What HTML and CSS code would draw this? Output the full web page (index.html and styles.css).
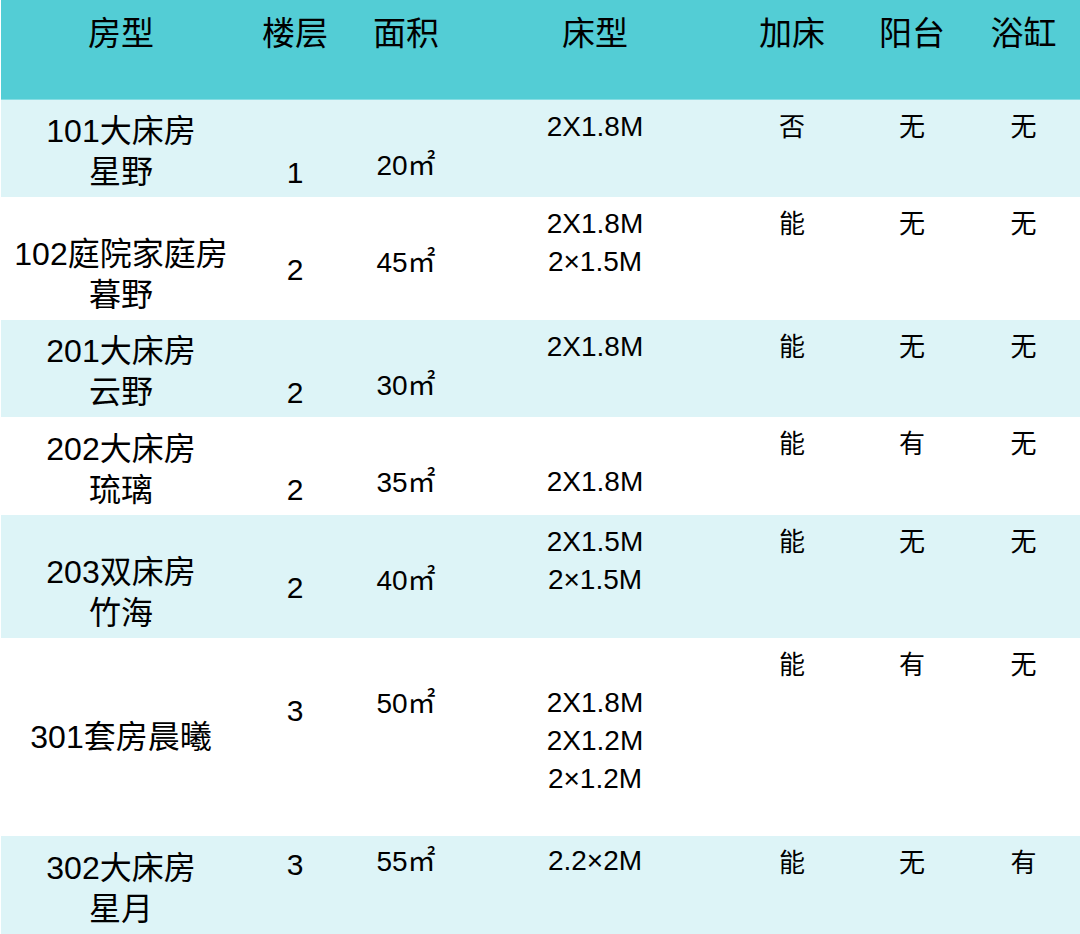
FILE: index.html
```html
<!DOCTYPE html>
<html lang="zh-CN">
<head>
<meta charset="utf-8">
<title>房型</title>
<link rel="stylesheet" href="styles.css">
</head>
<body>
<div class="sheet">
  <div class="row head">
    <div class="cell name">房型</div>
    <div class="cell floor">楼层</div>
    <div class="cell area">面积</div>
    <div class="cell bed">床型</div>
    <div class="cell opt extra">加床</div>
    <div class="cell opt balc">阳台</div>
    <div class="cell opt tub">浴缸</div>
  </div>

  <div class="row tint r1">
    <div class="cell name"><span>101大床房</span><span>星野</span></div>
    <div class="cell floor">1</div>
    <div class="cell area">20㎡</div>
    <div class="cell bed"><span>2X1.8M</span></div>
    <div class="cell opt extra">否</div>
    <div class="cell opt balc">无</div>
    <div class="cell opt tub">无</div>
  </div>

  <div class="row r2">
    <div class="cell name"><span>102庭院家庭房</span><span>暮野</span></div>
    <div class="cell floor">2</div>
    <div class="cell area">45㎡</div>
    <div class="cell bed"><span>2X1.8M</span><span>2×1.5M</span></div>
    <div class="cell opt extra">能</div>
    <div class="cell opt balc">无</div>
    <div class="cell opt tub">无</div>
  </div>

  <div class="row tint r3">
    <div class="cell name"><span>201大床房</span><span>云野</span></div>
    <div class="cell floor">2</div>
    <div class="cell area">30㎡</div>
    <div class="cell bed"><span>2X1.8M</span></div>
    <div class="cell opt extra">能</div>
    <div class="cell opt balc">无</div>
    <div class="cell opt tub">无</div>
  </div>

  <div class="row r4">
    <div class="cell name"><span>202大床房</span><span>琉璃</span></div>
    <div class="cell floor">2</div>
    <div class="cell area">35㎡</div>
    <div class="cell bed lead"><span>2X1.8M</span></div>
    <div class="cell opt extra">能</div>
    <div class="cell opt balc">有</div>
    <div class="cell opt tub">无</div>
  </div>

  <div class="row tint r5">
    <div class="cell name"><span>203双床房</span><span>竹海</span></div>
    <div class="cell floor">2</div>
    <div class="cell area">40㎡</div>
    <div class="cell bed"><span>2X1.5M</span><span>2×1.5M</span></div>
    <div class="cell opt extra">能</div>
    <div class="cell opt balc">无</div>
    <div class="cell opt tub">无</div>
  </div>

  <div class="row r6">
    <div class="cell name mid"><span>301套房晨曦</span></div>
    <div class="cell floor">3</div>
    <div class="cell area">50㎡</div>
    <div class="cell bed lead"><span>2X1.8M</span><span>2X1.2M</span><span>2×1.2M</span></div>
    <div class="cell opt extra">能</div>
    <div class="cell opt balc">有</div>
    <div class="cell opt tub">无</div>
  </div>

  <div class="row tint r7">
    <div class="cell name"><span>302大床房</span><span>星月</span></div>
    <div class="cell floor">3</div>
    <div class="cell area">55㎡</div>
    <div class="cell bed"><span>2.2×2M</span></div>
    <div class="cell opt extra">能</div>
    <div class="cell opt balc">无</div>
    <div class="cell opt tub">有</div>
  </div>
</div>
</body>
</html>
```

FILE: styles.css
```css
html, body {
  margin: 0;
  padding: 0;
  background: #ffffff;
}

body {
  font-family: "Liberation Sans", "Noto Sans CJK SC", sans-serif;
  color: #000000;
}

.sheet {
  width: 1080px;
  padding-left: 1px;
  box-sizing: border-box;
  display: flex;
  flex-direction: column;
}

.row {
  display: flex;
  background: #ffffff;
}

.row.tint {
  background: #ddf4f7;
}

.row.head {
  height: 100px;
  background: #53cdd5;
  box-shadow: inset 0 -1px 0 #86dde3;
}

.r1 { height: 97px; }
.r2 { height: 123px; }
.r3 { height: 97px; }
.r4 { height: 98px; }
.r5 { height: 123px; }
.r6 { height: 198px; }
.r7 { height: 98px; }

.cell {
  display: flex;
  flex-direction: column;
  align-items: center;
  text-align: center;
  box-sizing: border-box;
  white-space: nowrap;
}

.name {
  width: 240px;
  font-size: 32px;
  line-height: 41px;
  justify-content: flex-end;
  padding-bottom: 4px;
}

.name.mid {
  justify-content: center;
  padding-bottom: 0;
}

.floor {
  width: 108px;
  font-size: 30px;
  line-height: 36px;
  padding-top: 55px;
}

.area {
  width: 114px;
  font-size: 28px;
  line-height: 34px;
  padding-top: 49px;
}

.bed {
  width: 264px;
  font-size: 28px;
  line-height: 38px;
  padding-top: 8px;
}

.bed.lead {
  padding-top: 46px;
}

.opt {
  font-size: 26px;
  line-height: 34px;
  padding-top: 10px;
}

.extra { width: 130px; }
.balc { width: 110px; }
.tub { flex: 1; }

.r7 .floor { padding-top: 11px; }
.r7 .area { padding-top: 9px; }
.r7 .bed { padding-top: 6px; }

.head .cell {
  font-size: 33px;
  line-height: 40px;
  padding-top: 14px;
  padding-bottom: 0;
  justify-content: flex-start;
}
```
